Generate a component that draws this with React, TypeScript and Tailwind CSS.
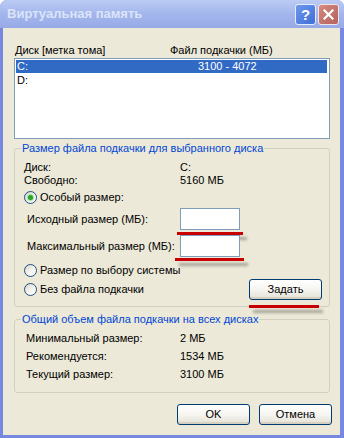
import React from 'react';

const font = "font-['Liberation_Sans',Arial,sans-serif]";

const Radio: React.FC<{ checked?: boolean }> = ({ checked }) => (
  <span className="flex h-[13px] w-[13px] shrink-0 items-center justify-center rounded-full border border-[#1c5180] bg-linear-to-br from-[#d6d3c8] via-[#f4f3ee] to-white">
    {checked && <span className="h-[5px] w-[5px] rounded-full bg-[#2aa32a] shadow-[0_0_1px_1px_#9fe09f]" />}
  </span>
);

const XpButton: React.FC<{ label: string; className?: string }> = ({ label, className }) => (
  <button className={`h-[21px] rounded-[3px] border border-[#003c74] bg-linear-to-b from-white via-[#f6f5f0] to-[#e3e1d6] text-black shadow-[inset_0_-2px_0_#d6d0c0] ${className ?? ''}`}>
    {label}
  </button>
);

const RedMark: React.FC<{ className: string }> = ({ className }) => (
  <span className={`absolute h-[3px] bg-[#c80000] shadow-[4px_5px_3px_rgba(0,0,0,0.3)] ${className}`} />
);

const Group: React.FC<{ title: string; className?: string; children: React.ReactNode }> = ({ title, className, children }) => (
  <div className={`flex flex-col rounded-[3px] border border-[#d0d0bf] ${className ?? ''}`}>
    <span className="-mt-[7px] ml-[6px] self-start bg-[#ece9d8] px-[1px] text-[#0046d5]">{title}</span>
    {children}
  </div>
);

export default function App() {
  return (
    <div className={`flex h-[438px] w-[344px] flex-col overflow-hidden rounded-t-[7px] bg-[#7788e0] text-[11px] leading-[13px] text-black ${font}`}>
      {/* title bar */}
      <div className="flex h-[28px] shrink-0 items-center bg-linear-to-b from-[#bccbf4] via-[#a3b6ec] to-[#97aae6] pl-[7px] pr-[5px]">
        <span className="flex-1 text-[13px] font-bold leading-[16px] text-[#dbe4f8]">Виртуальная память</span>
        <div className="flex gap-[2px]">
          <span className="flex h-[21px] w-[21px] items-center justify-center rounded-[3px] border border-[#e6ecfb] bg-linear-to-br from-[#6d97ec] to-[#3f6fd6] text-[15px] font-bold text-white">?</span>
          <span className="flex h-[21px] w-[21px] items-center justify-center rounded-[3px] border border-[#f0e4e4] bg-linear-to-br from-[#d58a80] to-[#b4625c]">
            <svg width="11" height="11" viewBox="0 0 11 11">
              <path d="M1.5 1.5 L9.5 9.5 M9.5 1.5 L1.5 9.5" stroke="#fff" strokeWidth="2.2" strokeLinecap="square" />
            </svg>
          </span>
        </div>
      </div>

      {/* body */}
      <div className="mb-[3px] ml-[3px] mr-[4px] flex flex-1 flex-col bg-[#ece9d8] pl-[11px] pr-[10px]">
        <div className="mt-[16px] flex pl-[1px]">
          <span className="w-[155px]">Диск [метка тома]</span>
          <span>Файл подкачки (МБ)</span>
        </div>

        <div className="mt-[1px] h-[81px] border border-[#7f9db9] bg-white p-[1px] pr-[2px]">
          <div className="flex h-[13px] bg-[#316ac5] pl-[1px] text-white">
            <span className="w-[181px]">C:</span>
            <span>3100 - 4072</span>
          </div>
          <div className="mt-[1px] flex h-[13px] pl-[1px]">
            <span>D:</span>
          </div>
        </div>

        <Group title="Размер файла подкачки для выбранного диска" className="mt-[9px] pb-[6px]">
          <div className="mt-[6px] flex pl-[9px]">
            <span className="w-[156px]">Диск:</span>
            <span>C:</span>
          </div>
          <div className="flex pl-[9px]">
            <span className="w-[156px]">Свободно:</span>
            <span>5160 МБ</span>
          </div>
          <div className="mt-[4px] flex items-center gap-[3px] pl-[9px]">
            <Radio checked />
            <span>Особый размер:</span>
          </div>
          <div className="mt-[4px] flex h-[22px] items-center pl-[12px]">
            <span className="w-[153px]">Исходный размер (МБ):</span>
            <span className="relative h-[22px] w-[60px] border border-[#7f9db9] bg-white">
              <RedMark className="-left-[4px] top-[23px] w-[66px]" />
            </span>
          </div>
          <div className="mt-[5px] flex h-[22px] items-center pl-[12px]">
            <span className="w-[153px]">Максимальный размер (МБ):</span>
            <span className="relative h-[22px] w-[60px] border border-[#7f9db9] bg-white">
              <RedMark className="-left-[6px] top-[22px] w-[69px]" />
            </span>
          </div>
          <div className="mt-[7px] flex items-center gap-[3px] pl-[9px]">
            <Radio />
            <span>Размер по выбору системы</span>
          </div>
          <div className="mt-[2px] flex h-[21px] items-center pl-[9px] pr-[7px]">
            <Radio />
            <span className="ml-[3px] flex-1">Без файла подкачки</span>
            <span className="relative">
              <XpButton label="Задать" className="w-[73px]" />
              <RedMark className="left-0 top-[26px] w-[70px]" />
            </span>
          </div>
        </Group>

        <Group title="Общий объем файла подкачки на всех дисках" className="mt-[12px] pb-[11px]">
          <div className="mt-[6px] flex flex-col gap-[5px] pl-[11px]">
            <div className="flex">
              <span className="w-[154px]">Минимальный размер:</span>
              <span>2 МБ</span>
            </div>
            <div className="flex">
              <span className="w-[154px]">Рекомендуется:</span>
              <span>1534 МБ</span>
            </div>
            <div className="flex">
              <span className="w-[154px]">Текущий размер:</span>
              <span>3100 МБ</span>
            </div>
          </div>
        </Group>

        <div className="mt-[11px] flex justify-end gap-[9px] pr-[-2px]">
          <XpButton label="OK" className="w-[73px]" />
          <XpButton label="Отмена" className="-mr-[2px] w-[73px]" />
        </div>
      </div>
    </div>
  );
}
